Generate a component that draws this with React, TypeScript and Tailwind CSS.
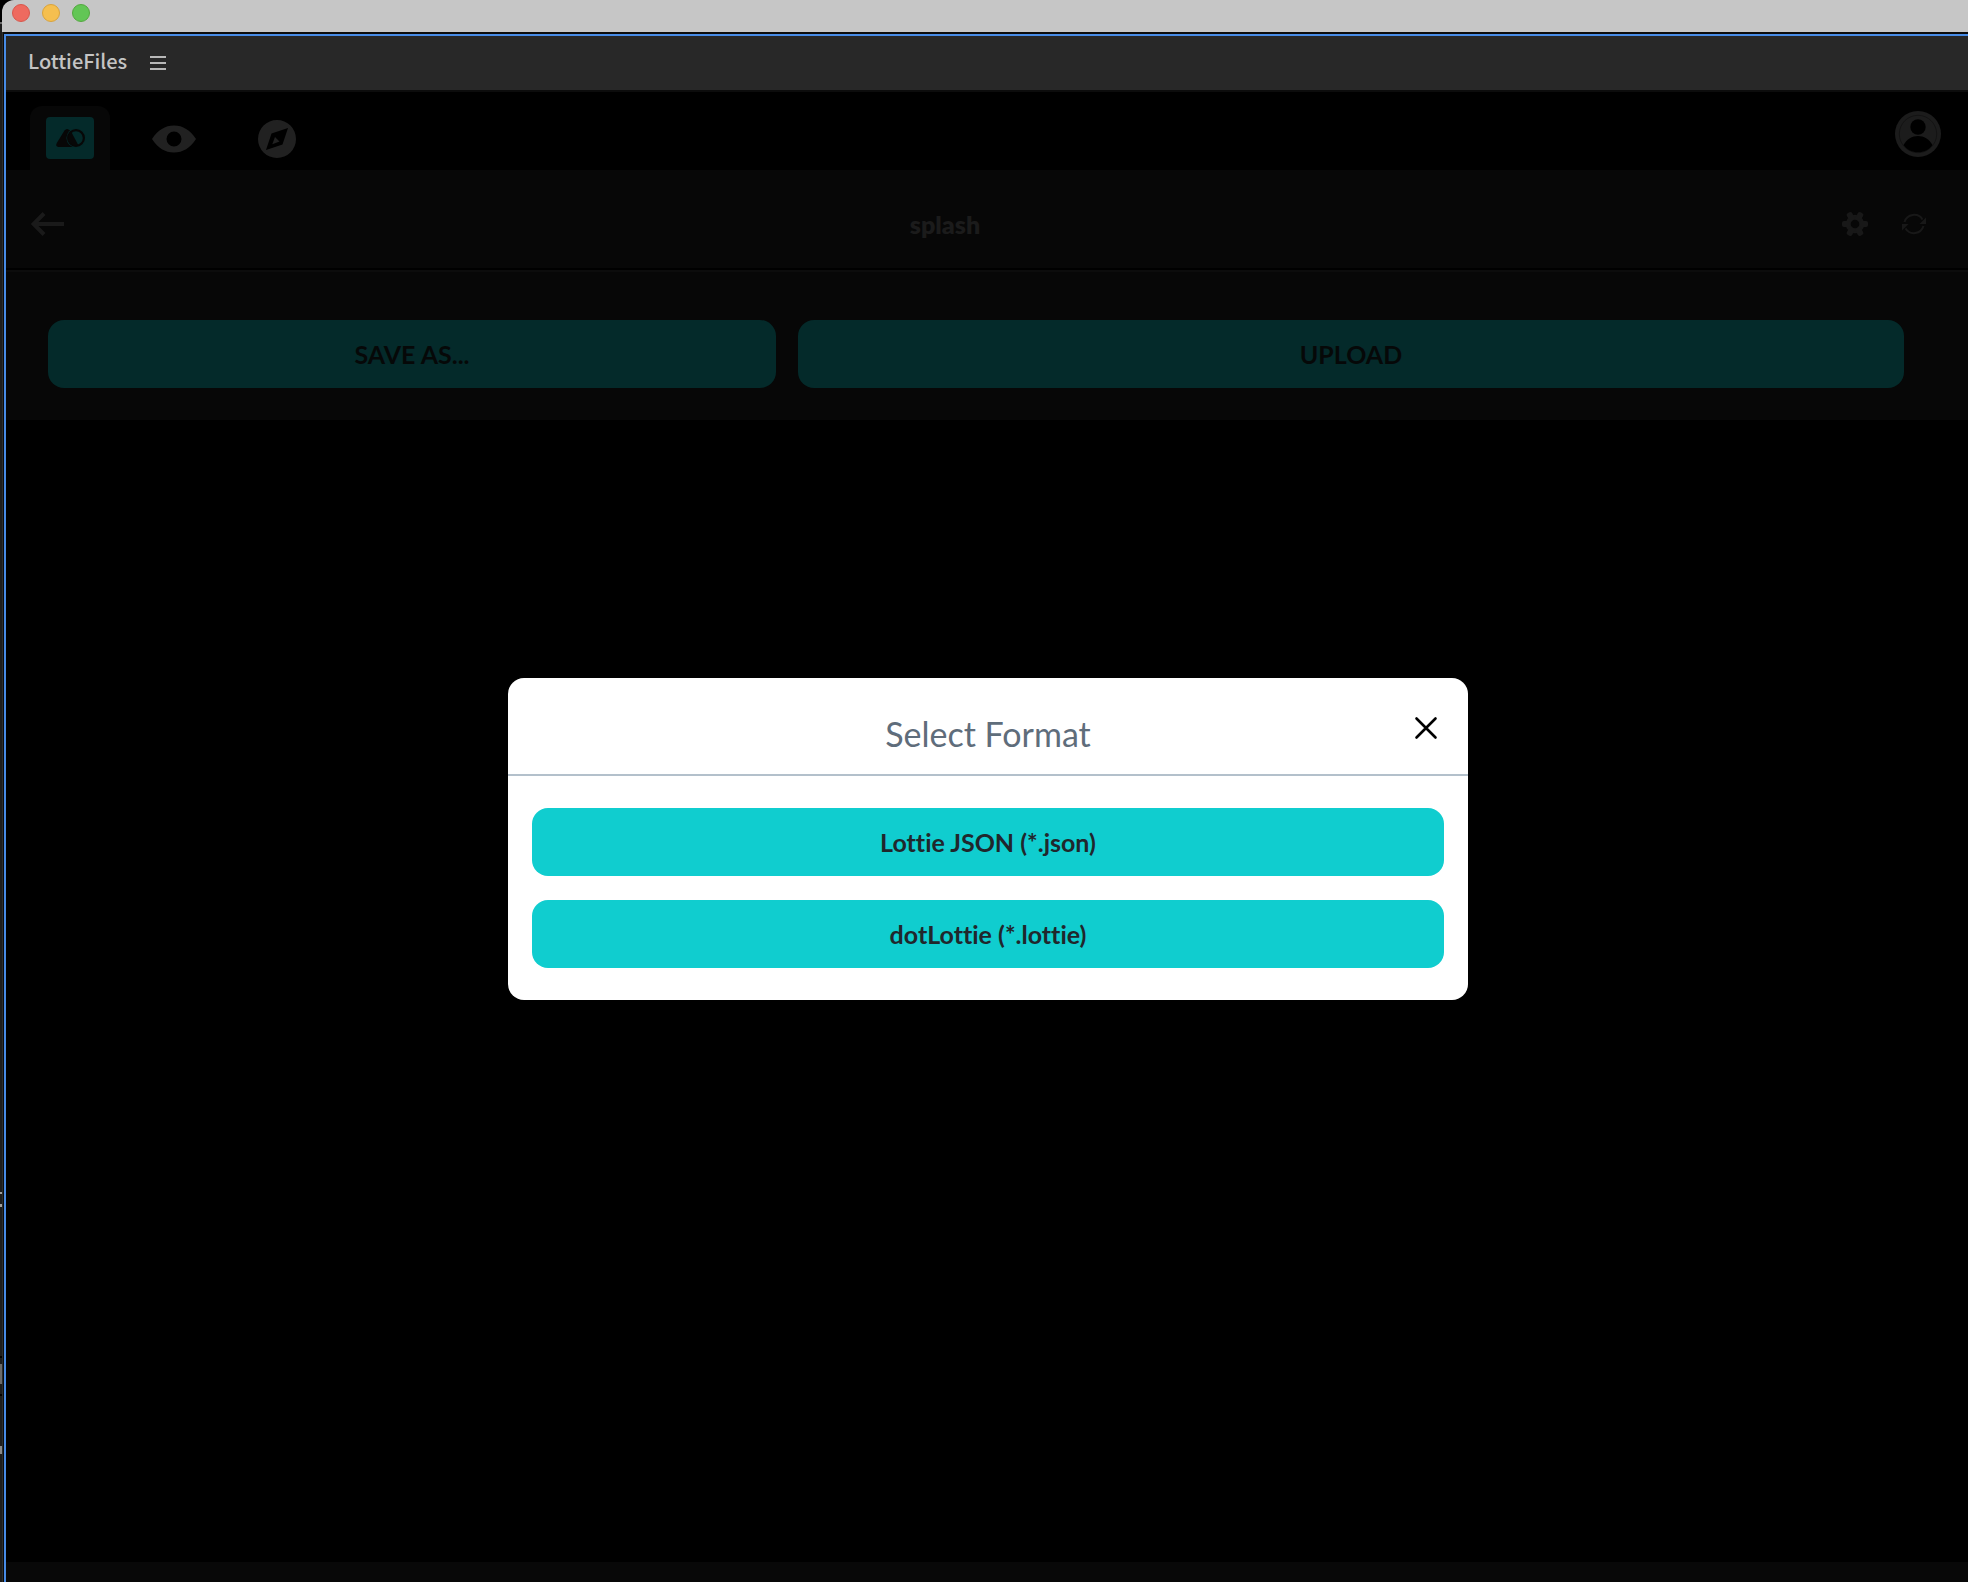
import { useState } from 'react';

const textFont = "font-['Lato','Open_Sans',sans-serif] [font-variant-ligatures:none]";

function LottieIcon() {
  return (
    <svg width="48" height="42" viewBox="0 0 48 42" aria-hidden="true">
      <rect width="48" height="42" rx="4" fill="#042a2a" />
      <path d="M18.5 13.5 Q21 10.5 23.8 13.5 L31 30 H12.5 Q9 29.5 10.8 26 Z" fill="#070707" />
      <circle cx="30" cy="21" r="9.6" fill="#042a2a" />
      <circle cx="30" cy="21" r="7.9" fill="none" stroke="#070707" strokeWidth="2.2" />
      <path d="M24.8 14 L32.5 28.6 Q28 29.5 25.5 27 Q22 23 22.4 19 Q22.8 16 24.8 14 Z" fill="#070707" />
    </svg>
  );
}

function EyeIcon() {
  return (
    <svg width="44" height="28" viewBox="0 0 44 28" aria-hidden="true">
      <path
        d="M0 14 C6 5 13 0.5 22 0.5 C31 0.5 38 5 44 14 C38 23 31 27.5 22 27.5 C13 27.5 6 23 0 14 Z M22 6.5 A7.5 7.5 0 1 0 22 21.5 A7.5 7.5 0 1 0 22 6.5 Z"
        fill="#212121"
        fillRule="evenodd"
      />
    </svg>
  );
}

function CompassIcon() {
  return (
    <svg width="38" height="38" viewBox="0 0 38 38" aria-hidden="true">
      <path
        d="M19 0 A19 19 0 1 0 19 38 A19 19 0 1 0 19 0 Z M30 8 L24.5 24.5 L8 30 L13.5 13.5 Z M17 17 L14.3 24.3 L21.5 21.5 Z"
        fill="#212121"
        fillRule="evenodd"
      />
    </svg>
  );
}

function ProfileIcon() {
  return (
    <svg width="46" height="46" viewBox="0 0 46 46" aria-hidden="true">
      <circle cx="23" cy="23" r="23" fill="#1c1c1c" />
      <circle cx="23" cy="23" r="18.7" fill="none" stroke="#131313" strokeWidth="1" />
      <circle cx="23" cy="16" r="7.7" fill="#000" />
      <path d="M8.5 34 C12 28 17 25 23 25 C29 25 34 28 37.5 34 C34 39 29 41.3 23 41.3 C17 41.3 12 39 8.5 34 Z" fill="#000" />
    </svg>
  );
}

function GearIcon() {
  return (
    <svg width="26" height="26" viewBox="0 0 26 26" aria-hidden="true">
      <g fill="#181818">
        <circle cx="13" cy="13" r="9.2" />
        <rect x="0" y="10" width="26" height="6" rx="2" />
        <rect x="0" y="10" width="26" height="6" rx="2" transform="rotate(60 13 13)" />
        <rect x="0" y="10" width="26" height="6" rx="2" transform="rotate(120 13 13)" />
      </g>
      <circle cx="13" cy="13" r="4.3" fill="#070707" />
    </svg>
  );
}

function SyncIcon() {
  return (
    <svg width="24" height="22" viewBox="0 0 24 22" aria-hidden="true">
      <path d="M2.5 9 A10 10 0 0 1 20.5 6.5 M21.5 13 A10 10 0 0 1 3.5 15.5" fill="none" stroke="#181818" strokeWidth="2" />
      <path d="M24 4.5 V11 H17.5 Z M0 17.5 V11 H6.5 Z" fill="#181818" />
    </svg>
  );
}

function FormatDialog({ onClose }: { onClose: () => void }) {
  const formats = ['Lottie JSON (*.json)', 'dotLottie (*.lottie)'];

  return (
    <div className="absolute inset-0 flex items-center justify-center pt-1 pl-[2px]">
      <div role="dialog" aria-labelledby="format-title" className="w-full max-w-[960px] rounded-2xl bg-white">
        <div className="relative border-b-2 border-[#b3c0cb] pt-9 pb-5">
          <h2 id="format-title" className="text-center text-[34px] leading-10 text-[#5f6d7b]">
            Select Format
          </h2>
          <button
            type="button"
            aria-label="Close"
            onClick={onClose}
            className="absolute top-[38px] right-[30px] cursor-pointer"
          >
            <svg width="24" height="24" viewBox="0 0 24 24" aria-hidden="true">
              <path d="M2.5 2.5 L21.5 21.5 M21.5 2.5 L2.5 21.5" stroke="#000" strokeWidth="2.6" strokeLinecap="round" />
            </svg>
          </button>
        </div>
        <div className="flex flex-col gap-6 px-6 py-8">
          {formats.map((format) => (
            <button
              key={format}
              type="button"
              className="h-[68px] cursor-pointer rounded-2xl bg-[#10cdcf] pt-[2px] text-[25px] font-bold text-[#20272c]"
            >
              {format}
            </button>
          ))}
        </div>
      </div>
    </div>
  );
}

// Sliver of the desktop showing past the left side of the window
function DesktopEdge() {
  return (
    <div className="flex w-[2px] flex-col justify-end bg-[#1d1d1d]" aria-hidden="true">
      <div className="h-[22px] bg-black" />
      <div className="h-[2px] bg-[#6b6b6b]" />
      <div className="flex-1" />
      <div className="h-[2px] bg-[#a0a0a0]" />
      <div className="mt-[10px] h-[3px] bg-[#a0a0a0]" />
      <div className="mt-[149px] h-[2px] bg-black" />
      <div className="mt-[6px] h-5 bg-[#6b6b6b]" />
      <div className="mt-[10px] h-[2px] bg-black" />
      <div className="mt-[50px] h-2 bg-[#8a8a8a]" />
      <div className="h-[128px]" />
    </div>
  );
}

export default function App() {
  const [open, setOpen] = useState(true);

  return (
    <div className={`flex min-h-screen bg-black ${textFont}`}>
      <DesktopEdge />
      <div className="flex flex-1 flex-col">
        <div className="flex h-8 items-start gap-3 rounded-tl-xl bg-[#c6c6c6] pt-1 pl-[10px]">
          <span className="size-[18px] rounded-full border border-[#d8574c] bg-[#ee6a5f]" />
          <span className="size-[18px] rounded-full border border-[#d9a33c] bg-[#f5bf4f]" />
          <span className="size-[18px] rounded-full border border-[#53a93f] bg-[#62c655]" />
        </div>

        <div className="flex flex-1 flex-col border-l border-[#2e2e2b] bg-[#0c0c0c] pt-[2px] pl-px">
          <div className="flex flex-1 flex-col border-t-2 border-l-2 border-[#478be6] bg-black">
            <div className="flex h-14 items-center gap-[23px] border-b-2 border-[#0c0c0c] bg-[#282828] pl-[22px]">
              <span className="pb-1 font-['Noto_Sans_CJK_JP',sans-serif] text-xl leading-7 font-medium text-[#c4c4c4]">
                LottieFiles
              </span>
              <button type="button" aria-label="Panel menu" className="flex flex-col gap-1">
                <span className="h-[2px] w-4 bg-[#b8b8b8]" />
                <span className="h-[2px] w-4 bg-[#b8b8b8]" />
                <span className="h-[2px] w-4 bg-[#b8b8b8]" />
              </button>
            </div>

            <main className="relative flex flex-1 flex-col">
              <nav className="flex h-[78px] items-end pr-[27px] pl-6">
                <button type="button" aria-label="Render" className="flex h-16 w-20 justify-center rounded-t-xl bg-[#070707] pt-[11px]">
                  <LottieIcon />
                </button>
                <button type="button" aria-label="Preview" className="ml-[42px] flex h-16 items-center pt-[2px]">
                  <EyeIcon />
                </button>
                <button type="button" aria-label="Discover" className="ml-[62px] flex h-16 items-center pt-[2px]">
                  <CompassIcon />
                </button>
                <button type="button" aria-label="Profile" className="mb-[13px] ml-auto">
                  <ProfileIcon />
                </button>
              </nav>

              <header className="flex h-[100px] items-center border-b-2 border-black bg-[#070707] pr-[42px] pl-[25px]">
                <button type="button" aria-label="Back" className="pt-[10px]">
                  <svg width="33" height="24" viewBox="0 0 33 24" aria-hidden="true">
                    <path d="M33 12 H3 M13 1.5 L2.5 12 L13 22.5" fill="none" stroke="#1a1a1a" strokeWidth="4" />
                  </svg>
                </button>
                <h1 className="flex-1 pt-3 text-center text-[25px] font-extrabold text-[#1b1b1b]">splash</h1>
                <div className="flex items-center gap-[34px] pt-[10px] pl-4">
                  <button type="button" aria-label="Settings">
                    <GearIcon />
                  </button>
                  <button type="button" aria-label="Refresh">
                    <SyncIcon />
                  </button>
                </div>
              </header>

              <section className="grid grid-cols-[364fr_553fr] gap-[22px] border-t-2 border-[#0c0c0c] bg-[#070707] pt-12 pr-16 pb-8 pl-[42px]">
                <button type="button" className="h-[68px] rounded-2xl bg-[#042a2a] pt-[2px] text-[25px] font-bold text-[#060808]">
                  SAVE AS...
                </button>
                <button type="button" className="h-[68px] rounded-2xl bg-[#042a2a] pt-[2px] text-[25px] font-bold text-[#060808]">
                  UPLOAD
                </button>
              </section>

              <div className="flex-1" />
              <div className="h-5 bg-[#080808]" />

              {open && <FormatDialog onClose={() => setOpen(false)} />}
            </main>
          </div>
        </div>
      </div>
    </div>
  );
}
